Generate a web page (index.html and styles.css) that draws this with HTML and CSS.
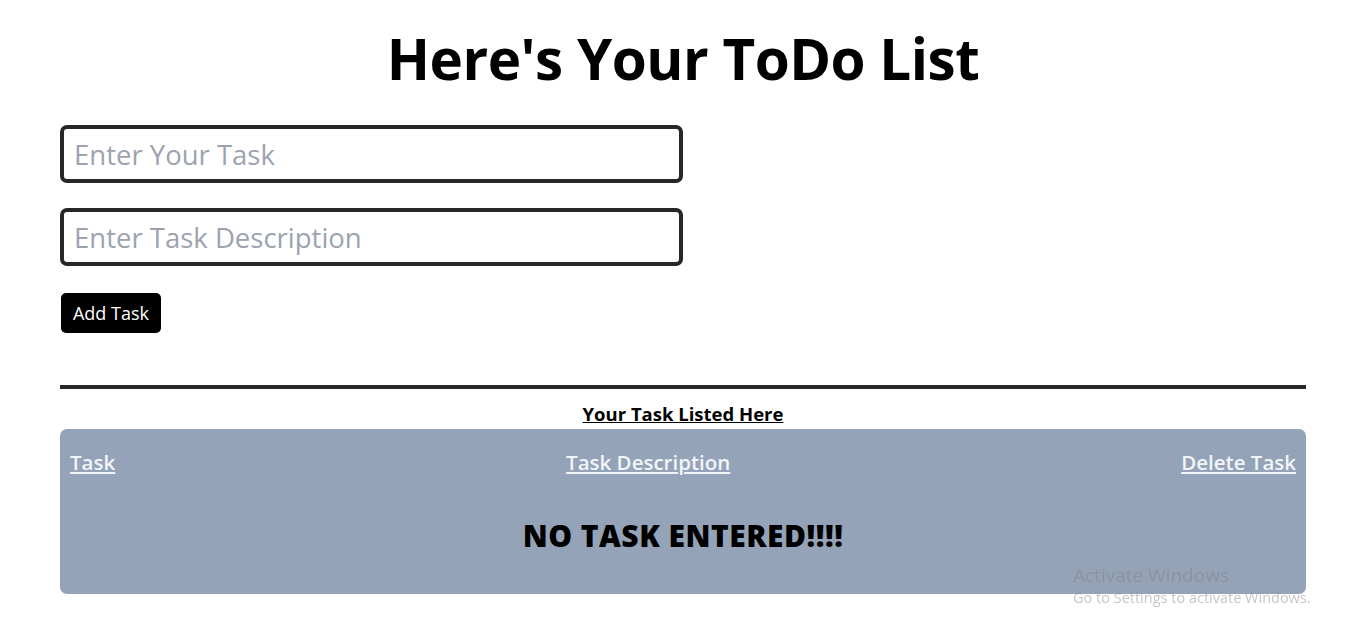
FILE: index.html
```html
<!DOCTYPE html>
<html lang="en">
<head>
<meta charset="utf-8">
<title>ToDo List</title>
<link rel="stylesheet" href="styles.css">
</head>
<body>
<main class="page">
  <h1 class="title">Here's Your ToDo List</h1>
  <form class="task-form">
    <input class="field" type="text" placeholder="Enter Your Task">
    <input class="field" type="text" placeholder="Enter Task Description">
    <button class="add-btn" type="button">Add Task</button>
  </form>
  <hr class="divider">
  <h2 class="list-title">Your Task Listed Here</h2>
  <section class="task-table">
    <div class="table-head">
      <span class="col">Task</span>
      <span class="col">Task Description</span>
      <span class="col">Delete Task</span>
    </div>
    <div class="empty">NO TASK ENTERED!!!!</div>
  </section>
</main>
<div class="watermark">
  <div class="wm-title">Activate Windows</div>
  <div class="wm-sub">Go to Settings to activate Windows.</div>
</div>
</body>
</html>
```

FILE: styles.css
```css
* { box-sizing: border-box; }
html, body { margin: 0; padding: 0; background: #fff; }
body {
  font-family: "Open Sans", "Noto Sans", sans-serif;
  color: #000;
}
.page {
  padding: 0 60px;
}
.title {
  margin: 0;
  padding-top: 26px;
  font-size: 56.6px;
  line-height: 66px;
  font-weight: 700;
  text-align: center;
  letter-spacing: -0.5px;
}
.task-form {
  display: flex;
  flex-direction: column;
  align-items: flex-start;
  padding-top: 33px;
}
.field {
  width: 623px;
  height: 58px;
  border: 4px solid #27272a;
  border-radius: 7px;
  padding: 0 10px;
  font-family: inherit;
  font-size: 27.5px;
  color: #000;
  margin-bottom: 25px;
  outline: none;
}
.field::placeholder { color: #9ca3af; }
.add-btn {
  margin-left: 1px;
  margin-top: 2px;
  width: 100px;
  height: 40px;
  background: #000;
  color: #fff;
  border: none;
  border-radius: 5px;
  font-family: inherit;
  font-size: 18px;
  padding: 0;
}
.divider {
  margin: 52px 0 0;
  border: none;
  height: 4px;
  background: #27272a;
}
.list-title {
  margin: 13px 0 0;
  font-size: 18.5px;
  line-height: 24px;
  font-weight: 700;
  text-align: center;
  text-decoration: underline;
}
.task-table {
  margin-top: 3px;
  background: #94a3b8;
  border-radius: 7px;
  height: 165px;
  padding: 17px 10px 0;
}
.table-head {
  display: flex;
  justify-content: space-between;
  align-items: center;
  height: 32px;
}
.col {
  color: #f1f5f9;
  font-size: 20.5px;
  font-weight: 600;
  text-decoration: underline;
}
.empty {
  margin-top: 39px;
  text-align: center;
  font-size: 30px;
  font-weight: 800;
  line-height: 38px;
  letter-spacing: 0.5px;
}
.watermark {
  position: fixed;
  left: 1073px;
  top: 562px;
  color: rgba(128, 128, 128, 0.45);
  pointer-events: none;
}
.wm-title { font-size: 19px; line-height: 26px; }
.wm-sub { font-size: 14.5px; line-height: 20px; }
```
